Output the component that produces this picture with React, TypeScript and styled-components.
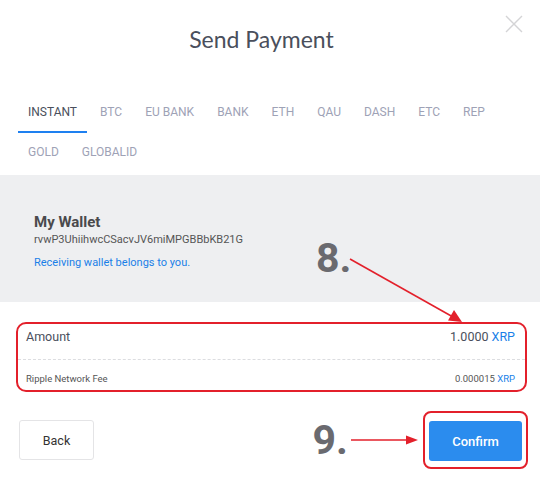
import styled, { createGlobalStyle } from "styled-components";

const GlobalStyle = createGlobalStyle`
  html, body {
    margin: 0;
    padding: 0;
    background: #fff;
  }
  * {
    box-sizing: border-box;
  }
`;

const tabs = ["INSTANT", "BTC", "EU BANK", "BANK", "ETH", "QAU", "DASH", "ETC", "REP", "GOLD", "GLOBALID"];

export default function App() {
  return (
    <Modal>
      <GlobalStyle />
      <CloseButton aria-label="close">
        <svg width="18" height="18" viewBox="0 0 18 18">
          <path d="M1 1L17 17M17 1L1 17" stroke="#d4d4d6" strokeWidth="1.4" fill="none" />
        </svg>
      </CloseButton>

      <Header>
        <Title>Send Payment</Title>
      </Header>

      <Tabs>
        {tabs.map((t, i) => (
          <Tab key={t} $active={i === 0}>
            {t}
          </Tab>
        ))}
      </Tabs>

      <WalletSection>
        <WalletName>My Wallet</WalletName>
        <WalletAddress>rvwP3UhiihwcCSacvJV6miMPGBBbKB21G</WalletAddress>
        <WalletNote>Receiving wallet belongs to you.</WalletNote>
      </WalletSection>

      <SummaryBox>
        <AmountRow>
          <span>Amount</span>
          <span>
            1.0000 <Currency>XRP</Currency>
          </span>
        </AmountRow>
        <FeeRow>
          <span>Ripple Network Fee</span>
          <span>
            0.000015 <Currency>XRP</Currency>
          </span>
        </FeeRow>
      </SummaryBox>

      <Actions>
        <BackButton>Back</BackButton>
        <Spacer />
        <StepLabel>9.</StepLabel>
        <svg width="68" height="12" viewBox="0 0 68 12" style={{ marginRight: 5 }}>
          <line x1="1" y1="6" x2="58" y2="6" stroke="#e3202b" strokeWidth="1.6" />
          <path d="M68 6L56 1.5L56 10.5Z" fill="#e3202b" />
        </svg>
        <Highlight>
          <ConfirmButton>Confirm</ConfirmButton>
        </Highlight>
      </Actions>

      <FloatingStep>8.</FloatingStep>
      <FloatingArrow width="125" height="80" viewBox="0 0 125 80">
        <line x1="5" y1="9" x2="108" y2="67" stroke="#e3202b" strokeWidth="1.6" />
        <path d="M117 72L103 70.5L109 60Z" fill="#e3202b" />
      </FloatingArrow>
    </Modal>
  );
}

const Modal = styled.div`
  position: relative;
  width: 540px;
  height: 484px;
  overflow: hidden;
  background: #fff;
  font-family: Roboto, "Liberation Sans", Arial, sans-serif;
`;

const CloseButton = styled.button`
  position: absolute;
  top: 15px;
  right: 17px;
  width: 18px;
  height: 18px;
  padding: 0;
  border: none;
  background: none;
  display: flex;
`;

const Header = styled.header`
  height: 93px;
  padding: 25px 17px 0 0;
`;

const Title = styled.h1`
  margin: 0;
  text-align: center;
  font-family: Lato, "Noto Sans", sans-serif;
  font-weight: 400;
  font-size: 23px;
  line-height: 29px;
  color: #4a4f5c;
`;

const Tabs = styled.nav`
  display: flex;
  flex-wrap: wrap;
  column-gap: 3px;
  padding: 0 18px;
`;

const Tab = styled.div<{ $active?: boolean }>`
  height: 40px;
  padding: 0 10px;
  display: flex;
  align-items: center;
  font-size: 12px;
  color: ${(p) => (p.$active ? "#4a4f5c" : "#9ea2b6")};
  border-bottom: 2px solid ${(p) => (p.$active ? "#1e80f0" : "transparent")};
  cursor: pointer;
`;

const WalletSection = styled.section`
  margin-top: 2px;
  height: 127px;
  padding: 37px 34px 0;
  background: #eeeff1;
`;

const WalletName = styled.div`
  font-size: 15px;
  font-weight: 700;
  line-height: 20px;
  color: #4a4a4c;
`;

const WalletAddress = styled.div`
  font-size: 11px;
  line-height: 16px;
  color: #555;
`;

const WalletNote = styled.div`
  margin-top: 7px;
  font-size: 11px;
  line-height: 16px;
  color: #1a7fe8;
`;

const SummaryBox = styled.div`
  margin: 20px 13px 0 16px;
  border: 2px solid #e3202b;
  border-radius: 10px;
`;

const AmountRow = styled.div`
  display: flex;
  justify-content: space-between;
  padding: 5px 10px 14px 8px;
  font-size: 12.5px;
  line-height: 16px;
  color: #4a4f5c;
  border-bottom: 1px dashed #dcdde0;
`;

const FeeRow = styled.div`
  display: flex;
  justify-content: space-between;
  padding: 12px 10px 4px 8px;
  font-size: 9.5px;
  line-height: 14px;
  color: #555;
`;

const Currency = styled.span`
  color: #1a7fe8;
`;

const Actions = styled.div`
  display: flex;
  align-items: center;
  margin-top: 19px;
  padding: 0 12px 0 19px;
`;

const BackButton = styled.button`
  width: 75px;
  height: 40px;
  border: 1px solid #e4e4e6;
  border-radius: 3px;
  background: #fff;
  font-family: inherit;
  font-size: 12.5px;
  color: #333;
`;

const Spacer = styled.div`
  flex: 1;
`;

const StepLabel = styled.span`
  font-size: 41px;
  font-weight: 700;
  line-height: 1;
  color: #6a6a6f;
  margin-right: 2px;
`;

const Highlight = styled.div`
  border: 2px solid #e3202b;
  border-radius: 8px;
  padding: 8px 4px 6px;
`;

const ConfirmButton = styled.button`
  display: block;
  width: 93px;
  height: 40px;
  border: none;
  border-radius: 3px;
  background: #2b8cee;
  font-family: inherit;
  font-size: 13px;
  font-weight: 500;
  color: #fff;
`;

const FloatingStep = styled.span`
  position: absolute;
  left: 316px;
  top: 238px;
  font-size: 41px;
  font-weight: 700;
  line-height: 1;
  color: #6a6a6f;
`;

const FloatingArrow = styled.svg`
  position: absolute;
  left: 345px;
  top: 250px;
`;
